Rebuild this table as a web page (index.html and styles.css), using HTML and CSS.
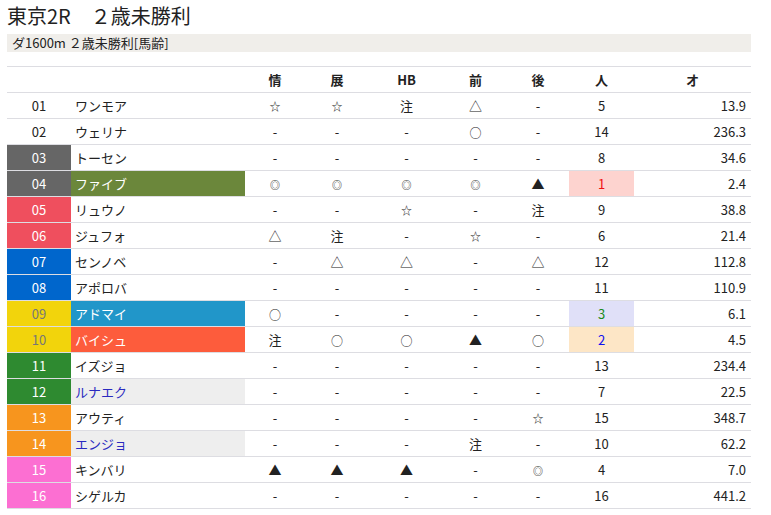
FILE: index.html
```html
<!DOCTYPE html>
<html lang="ja">
<head>
<meta charset="utf-8">
<link rel="stylesheet" href="styles.css">
</head>
<body>
<div class="page">
  <h1 class="title">東京2R　２歳未勝利</h1>
  <div class="cond">ダ1600m ２歳未勝利[馬齢]</div>
  <table class="race">
    <colgroup>
      <col class="c-num"><col class="c-name"><col class="c-a"><col class="c-b"><col class="c-hb"><col class="c-c"><col class="c-d"><col class="c-pop"><col class="c-odds">
    </colgroup>
    <thead>
      <tr><th></th><th></th><th>情</th><th>展</th><th>HB</th><th>前</th><th>後</th><th>人</th><th>オ</th></tr>
    </thead>
    <tbody>
      <tr><td class="num w1">01</td><td class="name">ワンモア</td><td><span class="st">☆</span></td><td><span class="st">☆</span></td><td>注</td><td>△</td><td>-</td><td>5</td><td class="odds">13.9</td></tr>
      <tr><td class="num w1">02</td><td class="name">ウェリナ</td><td>-</td><td>-</td><td>-</td><td><span class="md">○</span></td><td>-</td><td>14</td><td class="odds">236.3</td></tr>
      <tr><td class="num w2">03</td><td class="name">トーセン</td><td>-</td><td>-</td><td>-</td><td>-</td><td>-</td><td>8</td><td class="odds">34.6</td></tr>
      <tr><td class="num w2">04</td><td class="name hl-green">ファイブ</td><td><span class="sm">◎</span></td><td><span class="sm">◎</span></td><td><span class="sm">◎</span></td><td><span class="sm">◎</span></td><td>▲</td><td class="p1">1</td><td class="odds">2.4</td></tr>
      <tr><td class="num w3">05</td><td class="name">リュウノ</td><td>-</td><td>-</td><td><span class="st">☆</span></td><td>-</td><td>注</td><td>9</td><td class="odds">38.8</td></tr>
      <tr><td class="num w3">06</td><td class="name">ジュフォ</td><td>△</td><td>注</td><td>-</td><td><span class="st">☆</span></td><td>-</td><td>6</td><td class="odds">21.4</td></tr>
      <tr><td class="num w4">07</td><td class="name">センノベ</td><td>-</td><td>△</td><td>△</td><td>-</td><td>△</td><td>12</td><td class="odds">112.8</td></tr>
      <tr><td class="num w4">08</td><td class="name">アポロバ</td><td>-</td><td>-</td><td>-</td><td>-</td><td>-</td><td>11</td><td class="odds">110.9</td></tr>
      <tr><td class="num w5">09</td><td class="name hl-blue">アドマイ</td><td><span class="md">○</span></td><td>-</td><td>-</td><td>-</td><td>-</td><td class="p3">3</td><td class="odds">6.1</td></tr>
      <tr><td class="num w5">10</td><td class="name hl-red">バイシュ</td><td>注</td><td><span class="md">○</span></td><td><span class="md">○</span></td><td>▲</td><td><span class="md">○</span></td><td class="p2">2</td><td class="odds">4.5</td></tr>
      <tr><td class="num w6">11</td><td class="name">イズジョ</td><td>-</td><td>-</td><td>-</td><td>-</td><td>-</td><td>13</td><td class="odds">234.4</td></tr>
      <tr><td class="num w6">12</td><td class="name hl-gray">ルナエク</td><td>-</td><td>-</td><td>-</td><td>-</td><td>-</td><td>7</td><td class="odds">22.5</td></tr>
      <tr><td class="num w7">13</td><td class="name">アウティ</td><td>-</td><td>-</td><td>-</td><td>-</td><td><span class="st">☆</span></td><td>15</td><td class="odds">348.7</td></tr>
      <tr><td class="num w7">14</td><td class="name hl-gray">エンジョ</td><td>-</td><td>-</td><td>-</td><td>注</td><td>-</td><td>10</td><td class="odds">62.2</td></tr>
      <tr><td class="num w8">15</td><td class="name">キンバリ</td><td>▲</td><td>▲</td><td>▲</td><td>-</td><td><span class="sm">◎</span></td><td>4</td><td class="odds">7.0</td></tr>
      <tr><td class="num w8">16</td><td class="name">シゲルカ</td><td>-</td><td>-</td><td>-</td><td>-</td><td>-</td><td>16</td><td class="odds">441.2</td></tr>
    </tbody>
  </table>
</div>
</body>
</html>
```

FILE: styles.css
```css
html, body {
  margin: 0;
  padding: 0;
  background: #fff;
}
body {
  font-family: "Noto Sans CJK JP", "Noto Sans", sans-serif;
  color: #222;
  font-size: 13px;
}
.page {
  width: 744px;
  margin-left: 7px;
}
.title {
  margin: 3px 0 0 0;
  font-size: 20px;
  line-height: 26px;
  height: 26px;
  font-weight: normal;
  color: #222;
}
.cond {
  margin-top: 5px;
  height: 18px;
  line-height: 18px;
  background: #f0eeea;
  padding-left: 5px;
  font-size: 13px;
  overflow: hidden;
}
.race {
  margin-top: 14px;
  width: 744px;
  border-collapse: collapse;
  table-layout: fixed;
  border-top: 1px solid #dddde2;
}
.c-num { width: 64px; }
.c-name { width: 174px; }
.c-a { width: 60px; }
.c-b { width: 64px; }
.c-hb { width: 75px; }
.c-c { width: 63px; }
.c-d { width: 62px; }
.c-pop { width: 65px; }
.c-odds { width: 117px; }
.race tr {
  height: 26px;
}
.race th, .race td {
  padding: 0;
  border-bottom: 1px solid #dddde2;
  text-align: center;
  line-height: 18px;
  white-space: nowrap;
  overflow: hidden;
}
.race th {
  font-weight: bold;
  color: #222;
}
.race td.name {
  text-align: left;
  padding-left: 4px;
}
.race td.odds {
  text-align: right;
  padding-right: 5px;
}
.sm, .md, .st {
  display: inline-block;
  line-height: 1;
  vertical-align: middle;
}
.sm { font-size: 10px; }
.st { font-size: 11px; }
.md { font-size: 12px; }
.num { color: #fff; }
.w1 { background: #fff; color: #222; }
.w2 { background: #666666; }
.w3 { background: #ef4f5e; }
.w4 { background: #0066cc; }
.w5 { background: #f2d40c; color: #777; }
.w6 { background: #2e8a30; }
.w7 { background: #f7951e; }
.w8 { background: #fc6fd2; }
.hl-green { background: #6b873b; color: #fff; }
.hl-blue { background: #2196c9; color: #fff; }
.hl-red { background: #fd5c3c; color: #fff; }
.hl-gray { background: #eeeeee; color: #2a2ac0; }
.p1 { background: #fdd3cf; color: #f01010; }
.p2 { background: #fde6c6; color: #1010f0; }
.p3 { background: #e0e0f8; color: #1a8a1a; }
```
